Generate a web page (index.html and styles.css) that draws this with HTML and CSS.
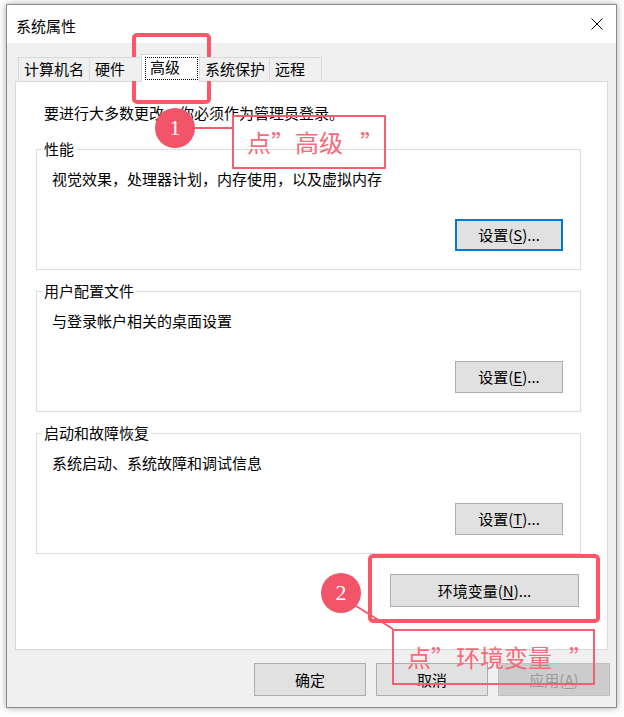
FILE: index.html
```html
<!DOCTYPE html>
<html lang="zh-CN">
<head>
<meta charset="utf-8">
<title>系统属性</title>
<link rel="stylesheet" href="styles.css">
</head>
<body>
<div class="window">
  <div class="titlebar">
    <span class="title">系统属性</span>
    <svg class="close" width="12" height="12" viewBox="0 0 12 12"><path d="M0.5 0.5 L11.5 11.5 M11.5 0.5 L0.5 11.5" stroke="#000" stroke-width="1" fill="none"/></svg>
  </div>
  <div class="client">
    <div class="tabs">
      <div class="tab t1">计算机名</div>
      <div class="tab t2">硬件</div>
      <div class="tab active"><span class="focus">高级</span></div>
      <div class="tab t4">系统保护</div>
      <div class="tab t5">远程</div>
    </div>
    <div class="panel">
      <p class="note">要进行大多数更改，你必须作为管理员登录。</p>
      <div class="group first">
        <div class="legend">性能</div>
        <div class="desc">视觉效果，处理器计划，内存使用，以及虚拟内存</div>
        <div class="row"><button class="btn set default">设置(<u>S</u>)...</button></div>
      </div>
      <div class="group">
        <div class="legend">用户配置文件</div>
        <div class="desc">与登录帐户相关的桌面设置</div>
        <div class="row"><button class="btn set">设置(<u>E</u>)...</button></div>
      </div>
      <div class="group">
        <div class="legend">启动和故障恢复</div>
        <div class="desc">系统启动、系统故障和调试信息</div>
        <div class="row"><button class="btn set">设置(<u>T</u>)...</button></div>
      </div>
      <div class="env-row"><button class="btn env">环境变量(<u>N</u>)...</button></div>
    </div>
    <div class="actions">
      <button class="btn act">确定</button>
      <button class="btn act">取消</button>
      <button class="btn act disabled">应用(<u>A</u>)</button>
    </div>
  </div>
</div>

<svg class="lines" width="624" height="717" viewBox="0 0 624 717">
  <line x1="193" y1="128" x2="233" y2="128" stroke="#f25d6e" stroke-width="2"/>
  <line x1="356" y1="606" x2="393" y2="629" stroke="#f25d6e" stroke-width="2"/>
</svg>
<div class="mark r1"></div>
<div class="mark r2"></div>
<div class="callout b1">点<span class="q">”</span>高级<span class="q2">”</span></div>
<div class="callout b2">点<span class="q">”</span>环境变量<span class="q2">”</span></div>
<div class="circle c1">1</div>
<div class="circle c2">2</div>
</body>
</html>
```
FILE: styles.css
```css
* { box-sizing: border-box; }
html, body { margin: 0; padding: 0; }
body {
  position: relative;
  width: 624px;
  height: 717px;
  overflow: hidden;
  background: #ffffff;
  font-family: "Noto Sans CJK SC", "Microsoft YaHei", sans-serif;
  font-size: 15px;
  color: #000;
}

.window {
  margin: 4px 0 0 6px;
  width: 611px;
  height: 704px;
  border: 1px solid #8c8c8c;
  box-shadow: 0 0 7px rgba(0, 0, 0, 0.35);
  background: #f0f0f0;
  display: flex;
  flex-direction: column;
}

.titlebar {
  height: 38px;
  flex: none;
  background: #fff;
  display: flex;
  align-items: center;
  justify-content: space-between;
  padding: 0 13px 0 9px;
}
.title { line-height: 20px; margin-top: 3px; }
.close { display: block; }

.client {
  flex: 1;
  padding: 11px 6px 0 8px;
}

.tabs {
  display: flex;
  align-items: flex-end;
  height: 27px;
  padding-left: 3px;
  position: relative;
  z-index: 1;
}
.tab {
  height: 24px;
  border: 1px solid #d9d9d9;
  border-bottom: none;
  margin-right: -1px;
  line-height: 21px;
  padding-left: 5px;
  background: #f0f0f0;
  white-space: nowrap;
}
.t1 { width: 72px; }
.t2 { width: 53px; }
.t4 { width: 71px; }
.t5 { width: 53px; }
.tab.active {
  width: 59px;
  height: 28px;
  margin-bottom: -1px;
  background: #fff;
  position: relative;
  z-index: 2;
  padding: 2px 0 0 3px;
}
.focus {
  display: block;
  height: 23px;
  margin-right: 1px;
  border: 1px dotted #000;
  padding-left: 4px;
  line-height: 18px;
}

.panel {
  height: 569px;
  margin-right: 2px;
  border: 1px solid #d9d9d9;
  background: #fff;
  padding: 21px 0 0 20px;
}
.note {
  margin: 0;
  padding-left: 8px;
  line-height: 20px;
}
.group {
  width: 545px;
  border: 1px solid #dcdcdc;
  padding: 0 17px 18px 15px;
  margin-top: 21px;
}
.group.first { margin-top: 26px; }
.legend {
  width: max-content;
  margin: -11px 0 0 -10px;
  padding: 0 2px;
  background: #fff;
  line-height: 20px;
}
.desc {
  margin-top: 10px;
  line-height: 20px;
}
.row {
  display: flex;
  justify-content: flex-end;
  margin-top: 30px;
}

.btn {
  font: inherit;
  font-size: 15px;
  color: #000;
  background: #e1e1e1;
  border: 1px solid #adadad;
  padding: 0;
  margin: 0;
  line-height: 20px;
}
.btn u { text-underline-offset: 2px; }
.set { width: 108px; height: 32px; }
.set.default { border: 2px solid #0078d7; }

.env-row {
  width: 545px;
  display: flex;
  justify-content: flex-end;
  padding-right: 2px;
  margin-top: 20px;
}
.env { width: 189px; height: 33px; }

.actions {
  display: flex;
  justify-content: flex-end;
  gap: 10px;
  margin-top: 13px;
}
.act { width: 112px; height: 33px; }
.act.disabled {
  background: #cccccc;
  border-color: #bfbfbf;
  color: #9a9a9a;
}

/* annotations drawn over the screenshot */
.lines {
  position: absolute;
  left: 0;
  top: 0;
  pointer-events: none;
}
.mark {
  position: absolute;
  border: 4px solid #fd5668;
  border-radius: 5px;
}
.r1 { left: 132px; top: 33px; width: 79px; height: 71px; }
.r2 { left: 368px; top: 554px; width: 232px; height: 69px; }

.callout {
  position: absolute;
  border: 2px solid #f4606f;
  color: #f66b7b;
  font-size: 24px;
  line-height: 30px;
  padding-left: 13px;
  display: flex;
  align-items: center;
  white-space: nowrap;
}
.q { display: inline-block; width: 26px; }
.q2 { display: inline-block; padding-left: 17px; }
.b1 { left: 232px; top: 115px; width: 154px; height: 54px; }
.b2 { left: 392px; top: 629px; width: 203px; height: 56px; }

.circle {
  position: absolute;
  width: 40px;
  height: 40px;
  border-radius: 50%;
  background: #f25469;
  color: #fff;
  font-family: "Liberation Serif", serif;
  font-size: 22px;
  display: flex;
  align-items: center;
  justify-content: center;
}
.c1 { left: 155px; top: 108px; }
.c2 { left: 321px; top: 573px; }
```
